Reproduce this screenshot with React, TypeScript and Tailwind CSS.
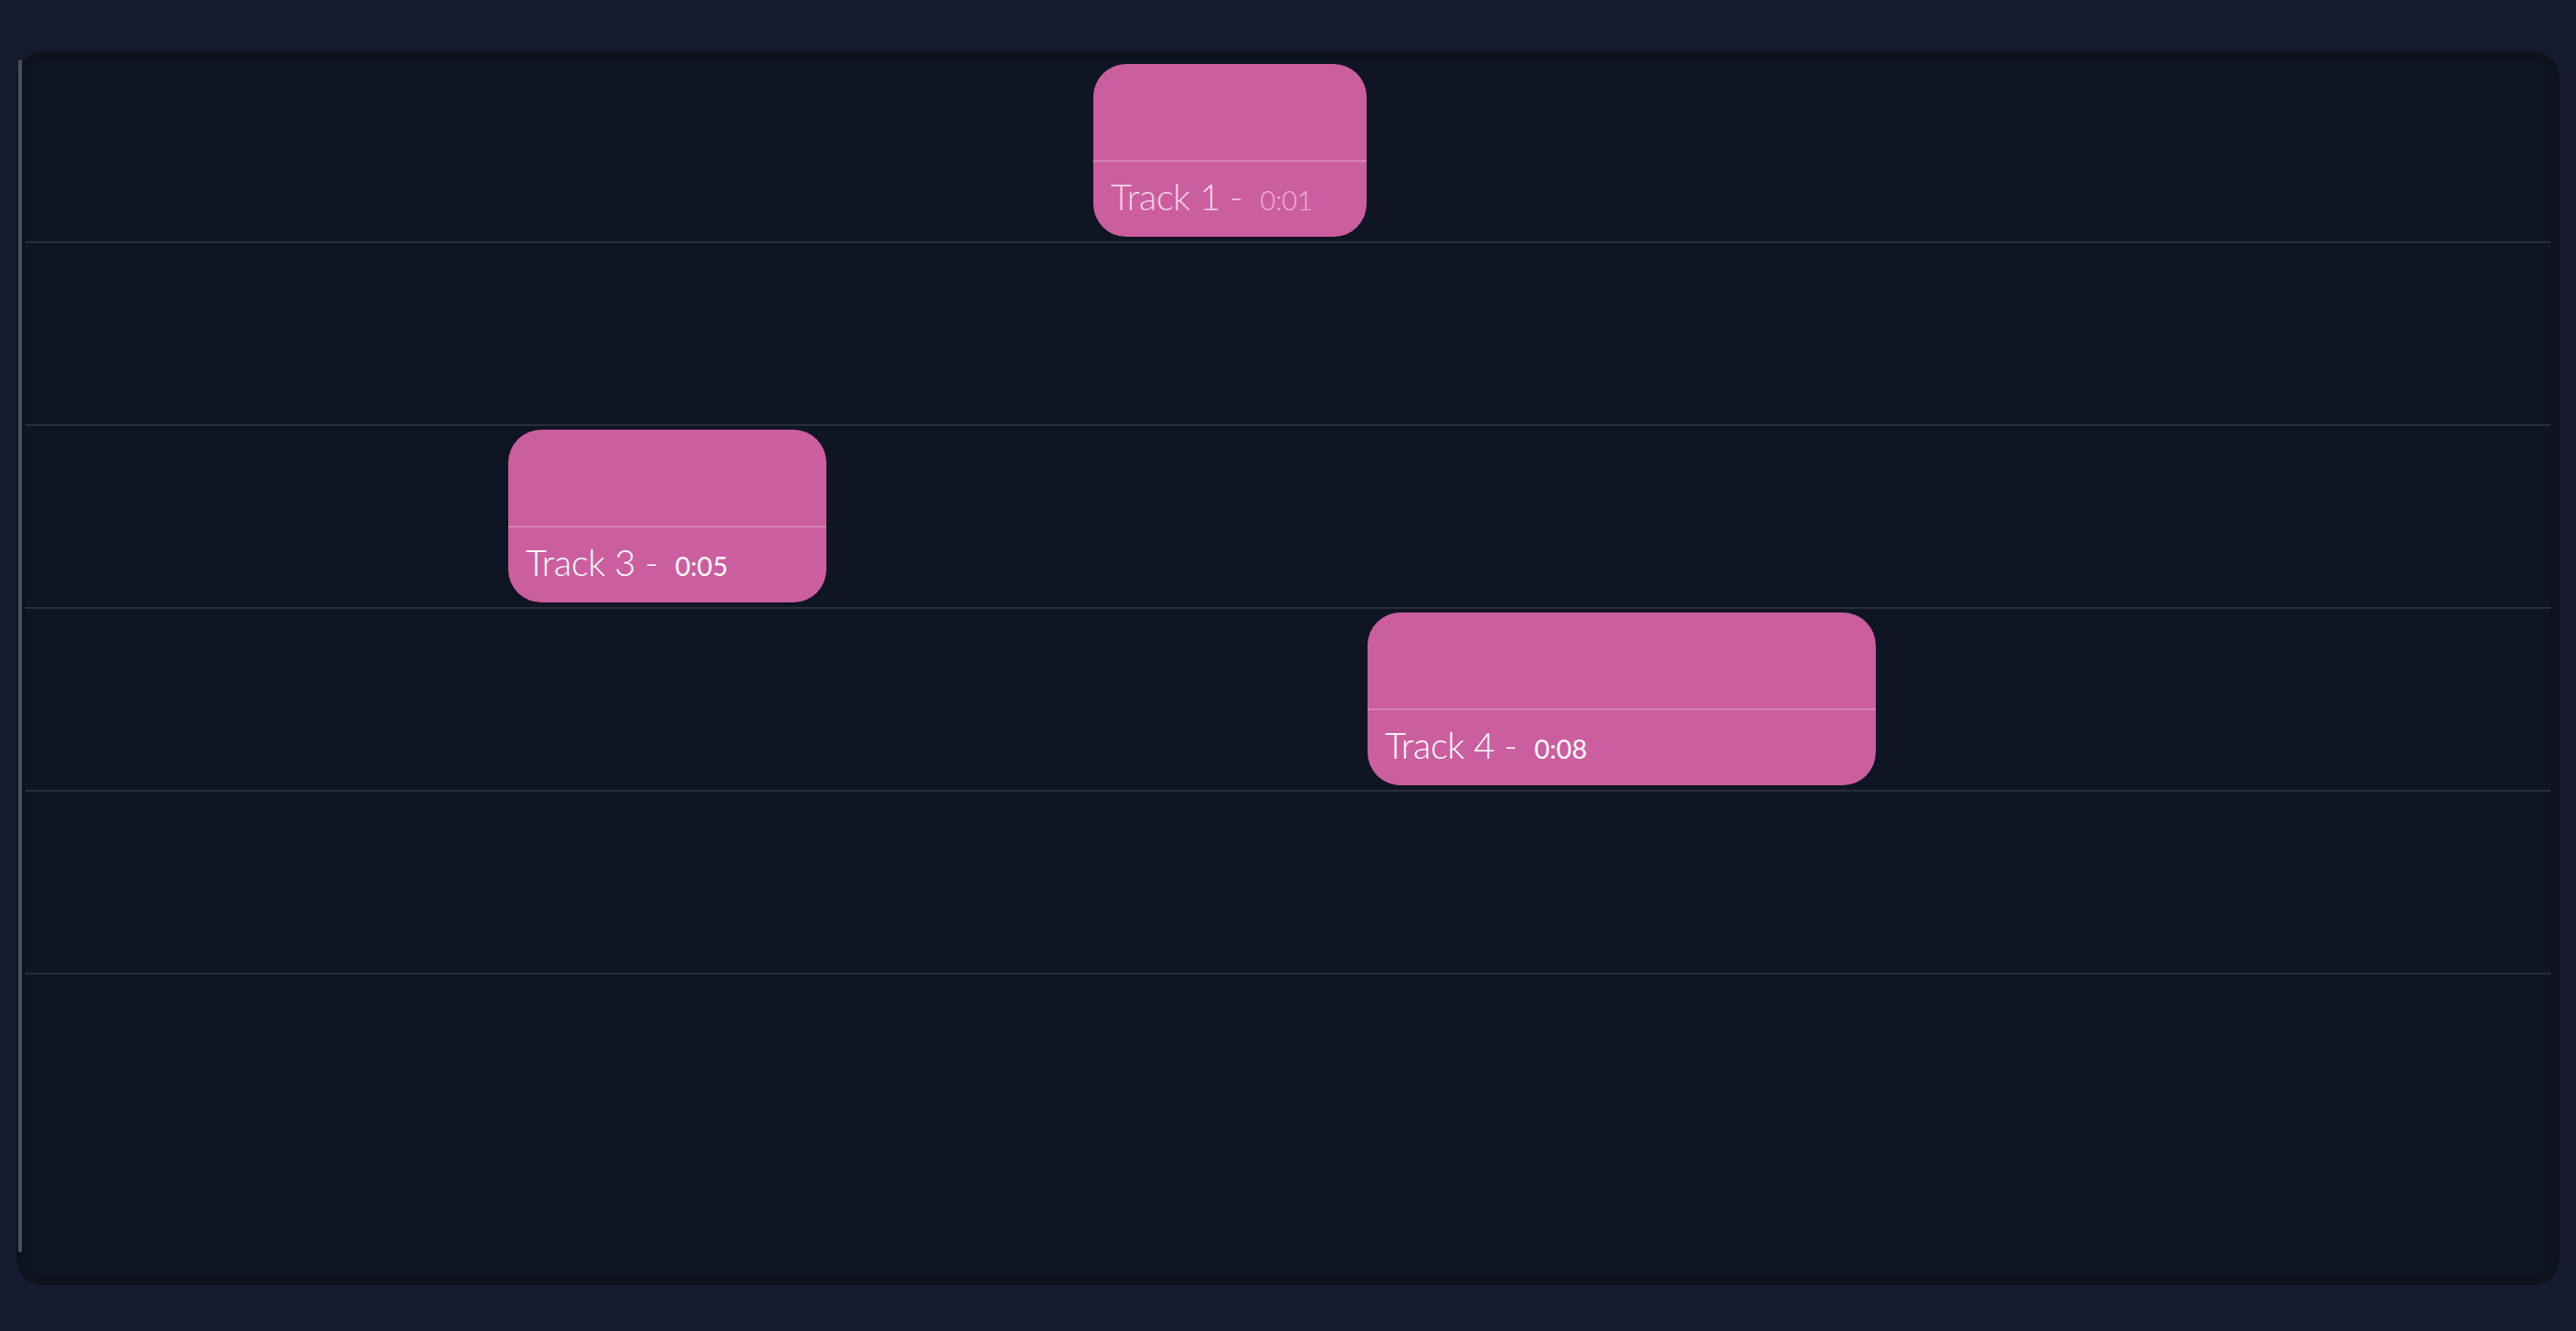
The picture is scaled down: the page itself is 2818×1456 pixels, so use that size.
type Clip = { name: string; time: string; left: number; width: number; dim?: boolean };

// one entry per lane; null = empty lane
const lanes: (Clip | null)[] = [
  { name: "Track 1", time: "0:01", left: 1168, width: 299, dim: true },
  null,
  { name: "Track 3", time: "0:05", left: 528, width: 348 },
  { name: "Track 4", time: "0:08", left: 1468, width: 556 },
  null,
];

function ClipBlock({ clip }: { clip: Clip }) {
  return (
    <div
      className="absolute top-[4px] h-[189px] rounded-[36px] bg-[#cb5e9f] flex flex-col overflow-hidden"
      style={{ left: clip.left, width: clip.width }}
    >
      <div className="h-[107px] border-b-2 border-[#d284b5]" />
      <div
        className={
          "flex items-baseline pl-[19px] pt-[18px] " +
          (clip.dim ? "text-[#f5d2e6]" : "text-white")
        }
      >
        <span className="text-[40px] font-light leading-none tracking-[-0.5px]">{clip.name} -</span>
        <span
          className={
            "ml-[19px] text-[29px] leading-none " + (clip.dim ? "text-[#efb3d6] font-light" : "text-white")
          }
        >
          {clip.time}
        </span>
      </div>
    </div>
  );
}

export default function App() {
  return (
    <div
      className="min-h-screen bg-[#161c2f] pt-[56px] pb-[50px] px-[18px]"
      style={{ fontFamily: "Lato, 'Open Sans', sans-serif" }}
    >
      <div className="relative h-[1350px] rounded-[30px] border-[10px] border-[#0e121c] bg-[#0f1523]">
        {/* playhead */}
        <div className="absolute left-[-8px] top-0 h-[1304px] w-[4px] rounded-b-full bg-[#4a505d]" />

        <div className="flex flex-col">
          {lanes.map((clip, i) => (
            <div key={i} className="relative h-[200px] border-b-2 border-[#282e3b]">
              {clip && <ClipBlock clip={clip} />}
            </div>
          ))}
        </div>
      </div>
    </div>
  );
}
